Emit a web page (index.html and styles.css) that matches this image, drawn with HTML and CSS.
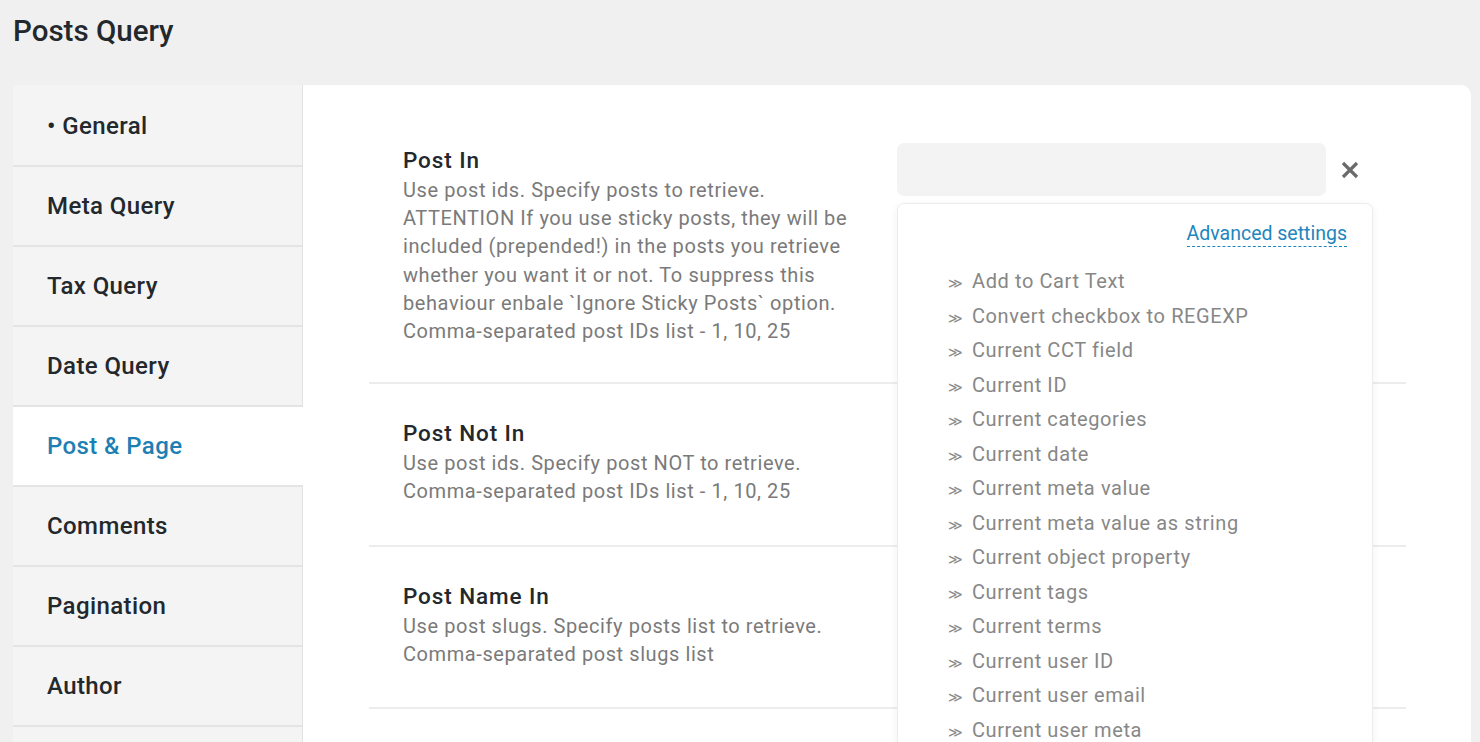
FILE: index.html
```html
<!DOCTYPE html>
<html lang="en">
<head>
<meta charset="utf-8">
<title>Posts Query</title>
<link rel="stylesheet" href="styles.css">
</head>
<body>
<header class="page-header">
  <h1 class="page-title">Posts Query</h1>
</header>
<main class="panel">
  <nav class="tabs">
    <div class="tab">• General</div>
    <div class="tab">Meta Query</div>
    <div class="tab">Tax Query</div>
    <div class="tab">Date Query</div>
    <div class="tab active">Post &amp; Page</div>
    <div class="tab">Comments</div>
    <div class="tab">Pagination</div>
    <div class="tab">Author</div>
  </nav>
  <section class="content">
    <div class="row">
      <div class="info">
        <div class="label">Post In</div>
        <div class="desc">Use post ids. Specify posts to retrieve. ATTENTION If you use sticky posts, they will be included (prepended!) in the posts you retrieve whether you want it or not. To suppress this behaviour enbale `Ignore Sticky Posts` option. Comma-separated post IDs list - 1, 10, 25</div>
      </div>
      <div class="control">
        <div class="field">
          <div class="input"></div>
          <span class="clear">
            <svg width="20" height="20" viewBox="0 0 20 20"><path d="M3 3 L17 17 M17 3 L3 17" stroke="#6b6b6b" stroke-width="3.2" stroke-linecap="butt"/></svg>
          </span>
        </div>
        <div class="dropdown">
          <div class="dd-head"><a class="adv" href="#">Advanced settings</a></div>
          <ul class="dd-list">
            <li><span class="chev">≫</span>Add to Cart Text</li>
            <li><span class="chev">≫</span>Convert checkbox to REGEXP</li>
            <li><span class="chev">≫</span>Current CCT field</li>
            <li><span class="chev">≫</span>Current ID</li>
            <li><span class="chev">≫</span>Current categories</li>
            <li><span class="chev">≫</span>Current date</li>
            <li><span class="chev">≫</span>Current meta value</li>
            <li><span class="chev">≫</span>Current meta value as string</li>
            <li><span class="chev">≫</span>Current object property</li>
            <li><span class="chev">≫</span>Current tags</li>
            <li><span class="chev">≫</span>Current terms</li>
            <li><span class="chev">≫</span>Current user ID</li>
            <li><span class="chev">≫</span>Current user email</li>
            <li><span class="chev">≫</span>Current user meta</li>
          </ul>
        </div>
      </div>
    </div>
    <div class="row">
      <div class="info">
        <div class="label">Post Not In</div>
        <div class="desc">Use post ids. Specify post NOT to retrieve.<br>Comma-separated post IDs list - 1, 10, 25</div>
      </div>
    </div>
    <div class="row">
      <div class="info">
        <div class="label">Post Name In</div>
        <div class="desc">Use post slugs. Specify posts list to retrieve.<br>Comma-separated post slugs list</div>
      </div>
    </div>
  </section>
</main>
</body>
</html>
```

FILE: styles.css
```css
* { box-sizing: border-box; }
html, body { margin: 0; padding: 0; }
body {
  background: #f0f0f0;
  font-family: Roboto, "Liberation Sans", sans-serif;
  color: #23282d;
  height: 742px;
  overflow: hidden;
}
.page-header {
  height: 85px;
  padding: 13px 13px 0;
}
.page-title {
  margin: 0;
  font-size: 29.5px;
  font-weight: 500;
  line-height: 36px;
  color: #23282d;
}
.panel {
  margin-left: 13px;
  width: 1458px;
  background: #fff;
  border-top-right-radius: 10px;
  display: flex;
  align-items: flex-start;
  min-height: 700px;
}
.tabs {
  width: 290px;
  flex: none;
  background: #f4f4f4;
  border-right: 1px solid #e2e2e2;
  align-self: stretch;
  padding-top: 2px;
}
.tab {
  height: 80px;
  display: flex;
  align-items: center;
  padding-left: 34px;
  font-size: 24px;
  letter-spacing: 0.4px;
  font-weight: 500;
  color: #23282d;
  border-bottom: 2px solid #e4e4e4;
}
.tab.active {
  background: #fff;
  color: #1e7fb4;
  margin-right: -1px;
}
.content {
  flex: 1;
  padding: 27px 65px 0 66px;
}
.row {
  display: flex;
  padding: 35px 34px 39px;
  border-bottom: 2px solid #ececec;
  position: relative;
}
.row:first-child { padding-top: 34px; padding-bottom: 37px; }
.info { width: 460px; flex: none; }
.label {
  font-size: 22.5px;
  letter-spacing: 0.9px;
  font-weight: 500;
  line-height: 28px;
  margin-bottom: 2px;
  color: #23282d;
}
.desc {
  font-size: 20px;
  letter-spacing: 0.58px;
  line-height: 28.2px;
  color: #7a7a7a;
}
.control {
  margin-left: 34px;
  position: relative;
  margin-top: -3px;
}
.field {
  display: flex;
  align-items: center;
}
.input {
  width: 429px;
  height: 53px;
  background: #f3f3f3;
  border-radius: 7px;
}
.clear {
  display: flex;
  margin-left: 14px;
}
.dropdown {
  position: absolute;
  top: 60px;
  left: 0;
  width: 476px;
  height: 600px;
  background: #fff;
  border: 1px solid #ececec;
  border-radius: 7px;
  box-shadow: 0 2px 8px rgba(0,0,0,0.06);
  z-index: 5;
}
.dd-head {
  display: flex;
  justify-content: flex-end;
  padding: 18px 25px 0 0;
}
.adv {
  font-size: 19.5px;
  color: #1f86bd;
  text-decoration: none;
  border-bottom: 1px dashed #1f86bd;
  line-height: 24px;
}
.dd-list {
  list-style: none;
  margin: 0;
  padding: 17px 0 0 50px;
}
.dd-list li {
  font-size: 20px;
  letter-spacing: 0.6px;
  line-height: 34.5px;
  color: #878787;
  display: flex;
  align-items: center;
  white-space: nowrap;
}
.chev {
  font-family: "DejaVu Sans", sans-serif;
  font-size: 14px;
  width: 24px;
  letter-spacing: 0;
  color: #8a8a8a;
  position: relative;
  top: 2px;
}
```
